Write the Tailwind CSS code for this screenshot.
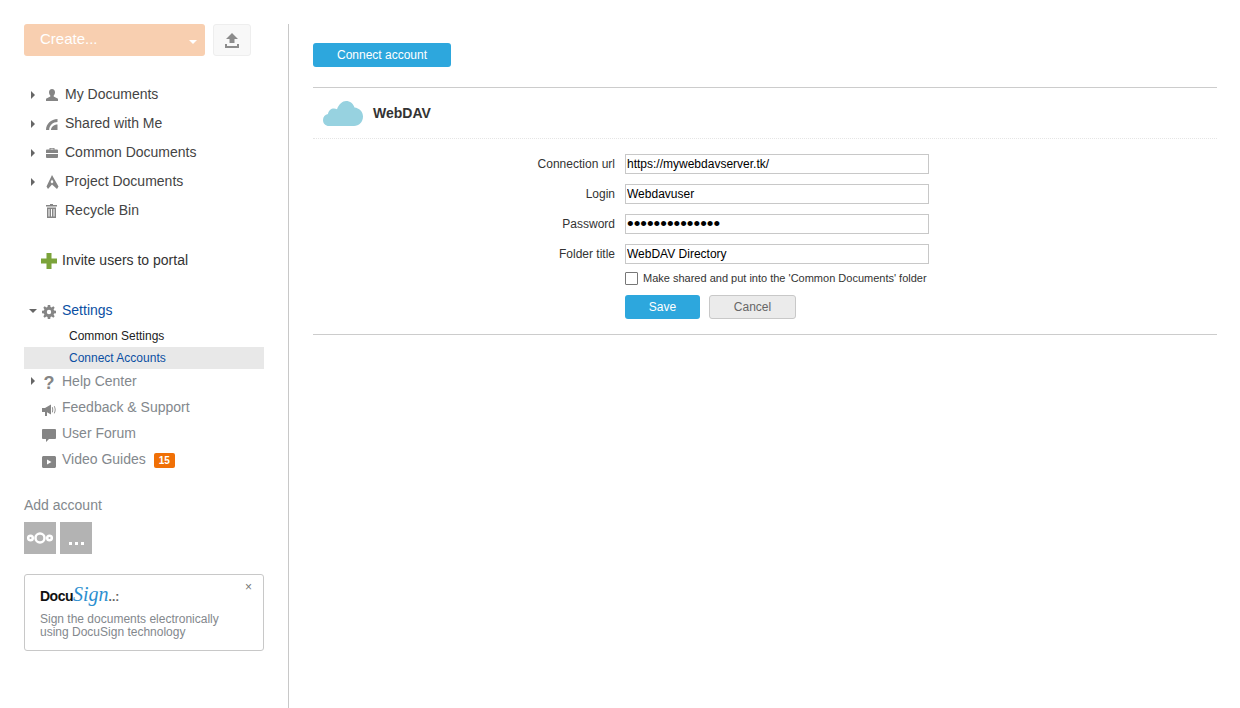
<!DOCTYPE html>
<html lang="en">
<head>
  <meta charset="UTF-8" />
  <title>Connect Accounts</title>
  <script src="https://cdn.jsdelivr.net/npm/@tailwindcss/browser@4"></script>
</head>
<body class="bg-white font-['Liberation_Sans',Arial,sans-serif] h-[708px] overflow-hidden">
  <div class="flex h-full pt-6">
    <!-- Sidebar -->
    <aside class="w-[289px] shrink-0 pl-6 pr-6 border-r border-[#c8c8c8]">
      <div class="flex gap-2">
        <div class="w-[181px] h-8 rounded-[3px] bg-[#f8cfb0] text-white text-[15px] flex items-center justify-between pl-4 pr-2">
          <span class="-mt-[2px]">Create...</span>
          <span class="mt-1 border-x-[4px] border-t-[4px] border-x-transparent border-t-white"></span>
        </div>
        <div class="w-[38px] h-8 rounded-[3px] bg-[#f8f8f8] border border-[#eeeeee] flex items-center justify-center">
          <svg width="14" height="15" viewBox="0 0 14 15" fill="#8c8c8c"><path d="M7 0l6 6H9.500v4h-5V6H1zM0 11h2v2h10v-2h2v4H0z"/></svg>
        </div>
      </div>

      <!-- Folders -->
      <ul class="mt-6 text-[14px] text-[#444444]">
        <li class="h-[29px] flex items-center">
          <span class="ml-[7px] w-[14px] shrink-0"><span class="block w-0 border-y-[4px] border-l-[4px] border-y-transparent border-l-[#666666]"></span></span>
          <svg class="w-[14px] h-[14px] shrink-0 mr-[6px]" viewBox="0 0 14 14" fill="#858585"><path d="M7 1c1.900 0 3 1.300 3 3.200 0 1.500-.7 2.700-1.300 3.300v1l4.300 2.200V13H1v-2.300l4.300-2.200v-1C4.700 6.900 4 5.700 4 4.200 4 2.300 5.100 1 7 1z"/></svg>
          My Documents
        </li>
        <li class="h-[29px] flex items-center">
          <span class="ml-[7px] w-[14px] shrink-0"><span class="block w-0 border-y-[4px] border-l-[4px] border-y-transparent border-l-[#666666]"></span></span>
          <svg class="w-[14px] h-[14px] shrink-0 mr-[6px]" viewBox="0 0 14 14" fill="#858585"><path d="M1 13C1 7 6 2 12.500 2v3C8 5 4.200 8.500 4.200 13zM6 13c0-3 2.800-5.500 6.500-5.500V13z"/></svg>
          Shared with Me
        </li>
        <li class="h-[29px] flex items-center">
          <span class="ml-[7px] w-[14px] shrink-0"><span class="block w-0 border-y-[4px] border-l-[4px] border-y-transparent border-l-[#666666]"></span></span>
          <svg class="w-[14px] h-[14px] shrink-0 mr-[6px]" viewBox="0 0 14 14" fill="#858585"><path fill-rule="evenodd" d="M4.500 2h5v1.500H12c.5 0 1 .5 1 1V7H1V4.500c0-.5.5-1 1-1h2.500zM5.500 2.800v.7h3v-.7zM1 8h12v3c0 .5-.5 1-1 1H2c-.5 0-1-.5-1-1z"/></svg>
          Common Documents
        </li>
        <li class="h-[29px] flex items-center">
          <span class="ml-[7px] w-[14px] shrink-0"><span class="block w-0 border-y-[4px] border-l-[4px] border-y-transparent border-l-[#666666]"></span></span>
          <svg class="w-[14px] h-[14px] shrink-0 mr-[6px]" viewBox="0 0 14 14" fill="#858585"><path fill-rule="evenodd" d="M7 0l6.500 11.500-1.500 2.500-5-4.500L3 14l-1.500-2.500zM7 4.500L5.500 7 7 8.500 8.500 7z"/></svg>
          Project Documents
        </li>
        <li class="h-[29px] flex items-center">
          <span class="ml-[21px] shrink-0"></span>
          <svg class="w-[14px] h-[14px] shrink-0 mr-[6px]" viewBox="0 0 14 14" fill="#858585"><path fill-rule="evenodd" d="M5 0h3v1h4v1.500H1V1h4zM2 3.500h9V14H2zM3.500 5v7.500h1V5zM6 5v7.500h1V5zM8.500 5v7.500h1V5z"/></svg>
          Recycle Bin
        </li>
      </ul>

      <div class="mt-[21px] h-[29px] flex items-center text-[14px] text-[#333333]">
        <svg class="ml-[17px] mr-[5px]" width="16" height="16" viewBox="0 0 16 16" fill="#7ba33a"><path d="M5.500 0h5v5.500H16v5h-5.500V16h-5v-5.500H0v-5h5.500z"/></svg>
        Invite users to portal
      </div>

      <!-- Settings -->
      <div class="mt-[21px] h-[29px] flex items-center text-[14px] text-[#0b4fa3]">
        <span class="ml-[5px] mr-[5px] border-x-[4px] border-t-[4px] border-x-transparent border-t-[#666666]"></span>
        <svg class="mr-[6px] mt-[2px]" width="14" height="14" viewBox="0 0 14 14" fill="#858585"><path fill-rule="evenodd" d="M5.800 0h2.400l.3 1.900 1.200.5L11.300 1.300 12.700 2.700l-1.100 1.600.5 1.200 1.900.3v2.400l-1.900.3-.5 1.200 1.100 1.600-1.400 1.400-1.600-1.100-1.200.5-.3 1.900H5.800l-.3-1.900-1.200-.5-1.600 1.100-1.400-1.400 1.100-1.600-.5-1.200L0 8.200V5.800l1.900-.3.5-1.200L1.300 2.700 2.700 1.300l1.600 1.100 1.200-.5zM7 4.800a2.200 2.200 0 100 4.400 2.200 2.200 0 000-4.400z"/></svg>
        Settings
      </div>
      <div class="h-[22px] pl-[45px] flex items-center text-[12px] text-[#222222]">Common Settings</div>
      <div class="h-[22px] pl-[45px] flex items-center text-[12px] bg-[#e8e8e8] text-[#0b4fa3]">Connect Accounts</div>

      <ul class="-mt-[1px] text-[14px] text-[#83888d]">
        <li class="h-[26px] flex items-center">
          <span class="ml-[7px] w-[11px] shrink-0"><span class="block w-0 border-y-[4px] border-l-[4px] border-y-transparent border-l-[#666666]"></span></span>
          <span class="w-[14px] mr-[6px] text-center font-bold text-[#858585] text-[18px] leading-none mt-[3px]">?</span>
          Help Center
        </li>
        <li class="h-[26px] flex items-center pl-[18px]">
          <svg class="mr-[6px] mt-[5px]" width="14" height="12" viewBox="0 0 14 12" fill="#858585"><path d="M0 4h3l6-3.500v10L5 8.200V12H3V8H0zM10.500 3c1 1.500 1 4 0 5.500l-.7-.3c.7-1.300.7-3.500 0-4.900zM12.500 2c1.500 2 1.500 5.500 0 7.500l-.7-.3c1.300-1.900 1.300-5 0-6.900z"/></svg>
          Feedback &amp; Support
        </li>
        <li class="h-[26px] flex items-center pl-[18px]">
          <svg class="mr-[6px] mt-[5px]" width="14" height="13" viewBox="0 0 14 13" fill="#858585"><path d="M1 0h12c.5 0 1 .5 1 1v8c0 .5-.5 1-1 1H7l-3 3v-3H1c-.5 0-1-.5-1-1V1c0-.5.5-1 1-1z"/></svg>
          User Forum
        </li>
        <li class="h-[26px] flex items-center pl-[18px]">
          <svg class="mr-[6px] mt-[5px]" width="14" height="12" viewBox="0 0 14 12" fill="#858585"><path fill-rule="evenodd" d="M1.500 0h11c.8 0 1.500.7 1.500 1.500v9c0 .8-.7 1.500-1.500 1.500h-11C.7 12 0 11.300 0 10.500v-9C0 .7.700 0 1.500 0zM5 3.500v5L9.500 6z"/></svg>
          Video Guides
          <span class="ml-2 mt-[2px] w-[21px] h-[15px] rounded-[2px] bg-[#f07006] text-white text-[10px] font-bold flex items-center justify-center">15</span>
        </li>
      </ul>

      <!-- Add account -->
      <div class="mt-[25px] text-[14px] leading-4 text-[#83888d]">Add account</div>
      <div class="mt-[9px] flex gap-1">
        <div class="w-8 h-8 bg-[#b3b3b3] flex items-center justify-center">
          <svg width="26" height="12" viewBox="0 0 26 12" fill="none" stroke="#ffffff" stroke-width="2.500"><circle cx="13" cy="6" r="4.500"/><circle cx="3.500" cy="6" r="2.300"/><circle cx="22.500" cy="6" r="2.300"/></svg>
        </div>
        <div class="w-8 h-8 bg-[#b3b3b3] flex items-end justify-center gap-[3px] pb-[9px]">
          <span class="w-[3px] h-[3px] bg-white"></span><span class="w-[3px] h-[3px] bg-white"></span><span class="w-[3px] h-[3px] bg-white"></span>
        </div>
      </div>

      <!-- DocuSign -->
      <div class="relative mt-5 h-[77px] border border-[#c8c8c8] rounded-[3px] pl-[15px] pt-[7px]">
        <span class="absolute right-[11px] top-[4px] text-[12px] leading-4 text-[#777777]">×</span>
        <div class="flex items-baseline h-[25px] leading-[25px]">
          <span class="text-[14px] font-bold tracking-[-0.5px] text-[#111111]">Docu</span><span class="font-['Liberation_Serif',serif] italic text-[20px] text-[#2d8fd0]">Sign</span><span class="text-[#666666] text-[12px] font-bold">..:</span>
        </div>
        <p class="mt-[6px] text-[12px] leading-[13px] text-[#83888d]">Sign the documents electronically<br />using DocuSign technology</p>
      </div>
    </aside>

    <!-- Main -->
    <main class="flex-1 pl-6 pr-[23px] pt-[19px]">
      <button class="block w-[138px] h-6 rounded-[3px] bg-[#2da7dd] text-white text-[12px]">Connect account</button>

      <div class="mt-5 border-t border-[#cccccc]">
        <div class="h-[51px] flex items-center pl-[10px] border-b border-dotted border-[#e5e5e5] text-[14px] font-bold text-[#333333]">
          <svg class="mr-[10px]" width="40" height="25" viewBox="0 0 40 25" fill="#97d2e0"><path d="M6 25c-3.500 0-6-2.500-6-6 0-3 2-5.500 5-6 .5-3.500 3-5.500 6-5.500 1 0 2 .2 3 .7C16 3 19.500 0 23 0c4 0 7.500 2.700 8.500 6.500C36 7 40 10.500 40 15.500 40 21 36 25 31 25z"/></svg>
          WebDAV
        </div>

        <form class="pt-[15px] pb-[15px] border-b border-[#cccccc] text-[12px]">
          <div class="h-[30px] flex">
            <label class="w-[312px] pr-[10px] text-right leading-5 text-[#333333]">Connection url</label>
            <input type="text" value="https://mywebdavserver.tk/" class="w-[304px] h-5 border border-[#c8c8c8] px-[1px] text-black" />
          </div>
          <div class="h-[30px] flex">
            <label class="w-[312px] pr-[10px] text-right leading-5 text-[#333333]">Login</label>
            <input type="text" value="Webdavuser" class="w-[304px] h-5 border border-[#c8c8c8] px-[1px] text-black" />
          </div>
          <div class="h-[30px] flex">
            <label class="w-[312px] pr-[10px] text-right leading-5 text-[#333333]">Password</label>
            <input type="password" value="aaaaaaaaaaaaaa" class="w-[304px] h-5 border border-[#c8c8c8] px-[1px] text-black text-[19px] leading-none" />
          </div>
          <div class="h-[27px] flex">
            <label class="w-[312px] pr-[10px] text-right leading-5 text-[#333333]">Folder title</label>
            <input type="text" value="WebDAV Directory" class="w-[304px] h-5 border border-[#c8c8c8] px-[1px] text-black" />
          </div>
          <div class="ml-[312px] h-[14px] flex items-center text-[11px] text-[#333333]">
            <span class="w-[13px] h-[13px] mr-[5px] border border-[#777777] rounded-[1px] bg-white"></span>
            Make shared and put into the 'Common Documents' folder
          </div>
          <div class="ml-[312px] mt-[10px] flex gap-[9px]">
            <button type="button" class="w-[75px] h-6 rounded-[3px] bg-[#2da7dd] text-white">Save</button>
            <button type="button" class="w-[87px] h-6 rounded-[3px] bg-[#ebebeb] border border-[#c8c8c8] text-[#666666]">Cancel</button>
          </div>
        </form>
      </div>
    </main>
  </div>
</body>
</html>
